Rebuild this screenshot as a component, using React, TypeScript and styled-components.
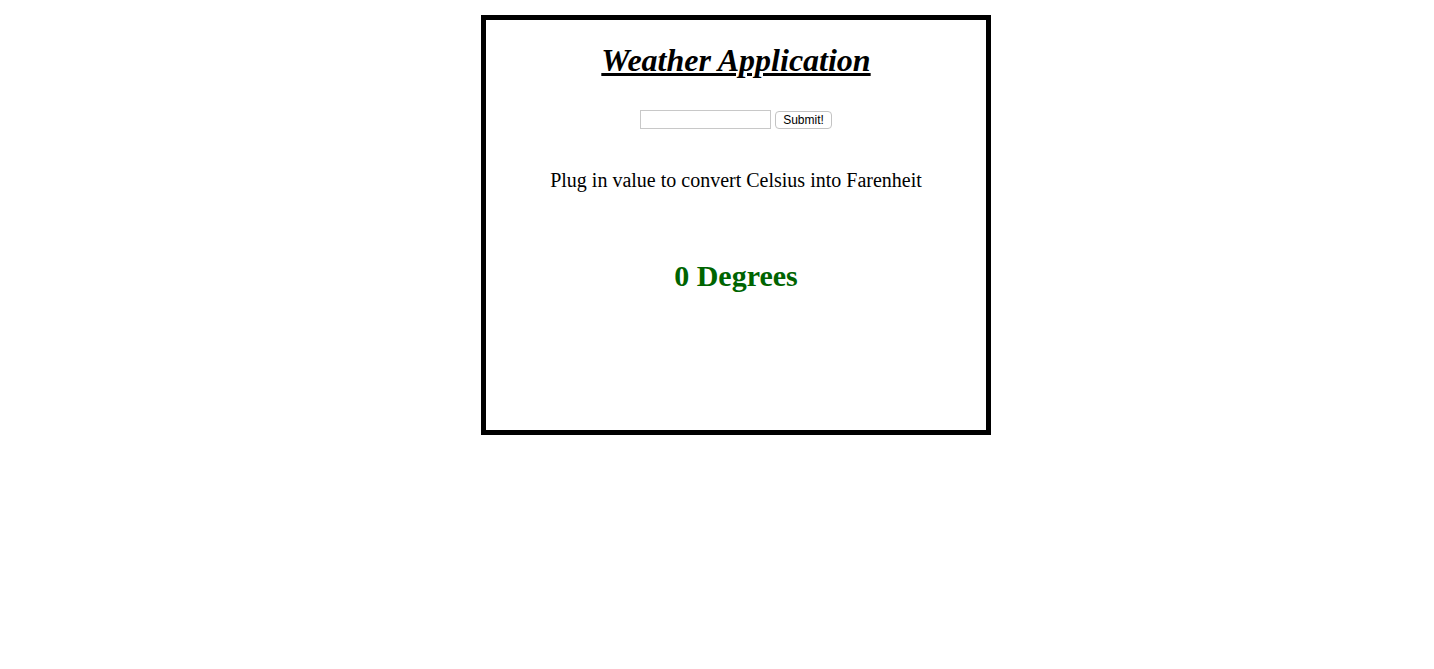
import React, { useState } from 'react';
import styled, { createGlobalStyle } from 'styled-components';

const GlobalStyle = createGlobalStyle`
  html, body { margin: 0; padding: 0; background: #fff; }
  body { font-family: "Liberation Serif", "Times New Roman", serif; color: #000; }
`;

const Page = styled.div`
  padding: 15px 0 0 calc(100% / 3 + 3px);
`;

const Box = styled.div`
  width: 500px;
  height: 410px;
  border: 5px solid #000;
  text-align: center;
`;

const Title = styled.h1`
  margin: 22px 0 0;
  font-size: 32px;
  font-style: italic;
  font-weight: bold;
  text-decoration: underline;
  line-height: 37px;
`;

const Form = styled.form`
  display: flex;
  justify-content: center;
  align-items: center;
  gap: 4px;
  margin-top: 31px;
`;

const Input = styled.input`
  width: 131px;
  height: 19px;
  box-sizing: border-box;
  border: 1px solid #c8c8c8;
  padding: 1px 2px;
  font-size: 13px;
  outline: none;
`;

const Button = styled.button`
  height: 18px;
  box-sizing: border-box;
  padding: 0 7px;
  font-family: "Liberation Sans", Arial, sans-serif;
  font-size: 12px;
  color: #000;
  background: #fff;
  border: 1px solid #c3c3c3;
  border-radius: 4px;
  line-height: 16px;
`;

const Hint = styled.p`
  margin: 40px 0 0;
  font-size: 20px;
  line-height: 23px;
`;

const Result = styled.h2`
  margin: 66px 0 0;
  font-size: 30px;
  font-weight: bold;
  color: #006400;
  line-height: 35px;
`;

export default function App() {
  const [value, setValue] = useState('');
  const [degrees, setDegrees] = useState(0);

  const submit = (e: React.FormEvent) => {
    e.preventDefault();
    const c = parseFloat(value);
    if (!isNaN(c)) setDegrees(Math.round((c * 9) / 5 + 32));
  };

  return (
    <>
      <GlobalStyle />
      <Page>
        <Box>
          <Title>Weather Application</Title>
          <Form onSubmit={submit}>
            <Input value={value} onChange={e => setValue(e.target.value)} />
            <Button type="submit">Submit!</Button>
          </Form>
          <Hint>Plug in value to convert Celsius into Farenheit</Hint>
          <Result>{degrees} Degrees</Result>
        </Box>
      </Page>
    </>
  );
}
